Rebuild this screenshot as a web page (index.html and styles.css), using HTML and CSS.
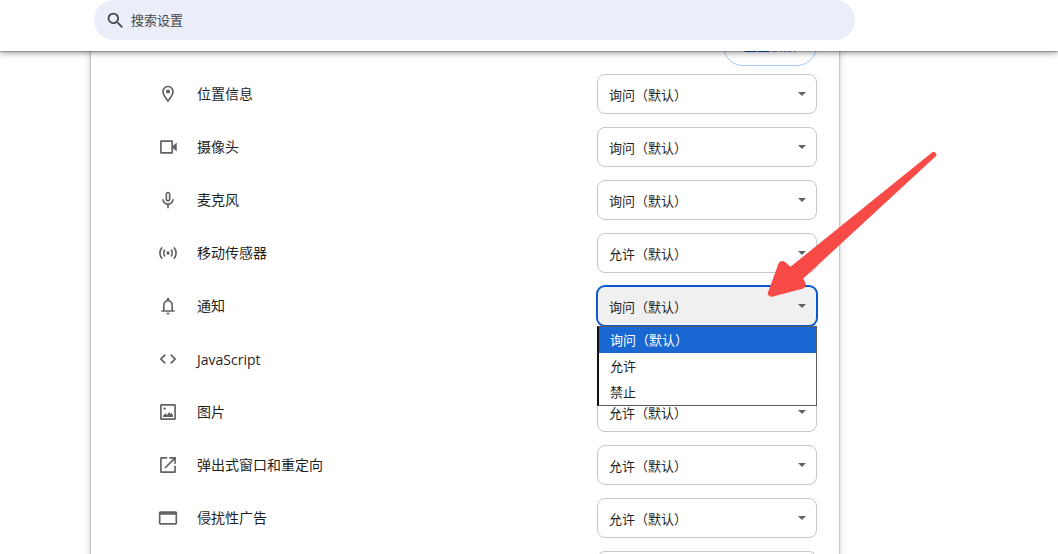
FILE: index.html
```html
<!DOCTYPE html>
<html lang="zh-CN">
<head>
<meta charset="utf-8">
<title>设置</title>
<link rel="stylesheet" href="styles.css">
</head>
<body>
<div class="app">
  <header class="toolbar">
    <label class="search">
      <svg class="search-icon" viewBox="0 0 24 24" aria-hidden="true"><path d="M15.5 14h-.79l-.28-.27A6.47 6.47 0 0 0 16 9.5 6.5 6.5 0 1 0 9.5 16c1.61 0 3.09-.59 4.23-1.57l.27.28v.79l5 4.99L20.49 19l-4.99-5zm-6 0C7.01 14 5 11.99 5 9.5S7.01 5 9.5 5 14 7.01 14 9.5 11.99 14 9.5 14z"/></svg>
      <input class="search-input" type="text" placeholder="搜索设置" aria-label="搜索设置">
    </label>
  </header>

  <main class="content">
    <section class="card">
      <div class="card-actions"><button class="reset" type="button">重置权限</button></div>

      <div class="row">
        <svg class="icon" viewBox="0 0 24 24" aria-hidden="true"><path d="M12 2C8.13 2 5 5.13 5 9c0 5.25 7 13 7 13s7-7.75 7-13c0-3.87-3.13-7-7-7zM7 9c0-2.76 2.24-5 5-5s5 2.24 5 5c0 2.88-2.88 7.19-5 9.88C9.92 16.21 7 11.85 7 9z"/><circle cx="12" cy="9" r="2.5"/></svg>
        <label class="label" for="location">位置信息</label>
        <div class="picker"><select class="select" id="location"><option>询问（默认）</option><option>允许</option><option>禁止</option></select></div>
      </div>

      <div class="row">
        <svg class="icon" viewBox="0 0 24 24" aria-hidden="true"><path d="M18 10.500V5a1 1 0 0 0-1-1H3.500a1 1 0 0 0-1 1v14a1 1 0 0 0 1 1H17a1 1 0 0 0 1-1v-5.500l4.500 4v-11zM16 18H4.500V6H16z"/></svg>
        <label class="label" for="camera">摄像头</label>
        <div class="picker"><select class="select" id="camera"><option>询问（默认）</option><option>允许</option><option>禁止</option></select></div>
      </div>

      <div class="row">
        <svg class="icon" viewBox="0 0 24 24" aria-hidden="true"><path d="M12 14c1.660 0 3-1.340 3-3V5c0-1.660-1.340-3-3-3S9 3.340 9 5v6c0 1.660 1.340 3 3 3zm-1-9c0-.55.45-1 1-1s1 .45 1 1v6c0 .55-.45 1-1 1s-1-.45-1-1V5zm6 6c0 2.760-2.240 5-5 5s-5-2.240-5-5H5c0 3.530 2.610 6.430 6 6.920V22h2v-4.080c3.390-.49 6-3.390 6-6.920h-2z"/></svg>
        <label class="label" for="microphone">麦克风</label>
        <div class="picker"><select class="select" id="microphone"><option>询问（默认）</option><option>允许</option><option>禁止</option></select></div>
      </div>

      <div class="row">
        <svg class="icon line" viewBox="0 0 24 24" aria-hidden="true"><circle class="dot" cx="12" cy="12" r="2"/><path d="M8.500 8a5.800 5.800 0 0 0 0 8M15.500 8a5.800 5.800 0 0 1 0 8M5 5.200a10 10 0 0 0 0 13.600M19 5.200a10 10 0 0 1 0 13.600"/></svg>
        <label class="label" for="sensors">移动传感器</label>
        <div class="picker"><select class="select" id="sensors"><option>允许（默认）</option><option>禁止</option></select></div>
      </div>

      <div class="row">
        <svg class="icon" viewBox="0 0 24 24" aria-hidden="true"><path d="M12 22c1.100 0 2-.9 2-2h-4c0 1.100.9 2 2 2zm6-5v-6c0-3.070-1.630-5.640-4.500-6.320V3.500c0-.83-.67-1.500-1.500-1.500s-1.500.67-1.500 1.500v1.180C7.640 5.360 6 7.920 6 11v6H4v2h16v-2h-2zm-2 0H8v-6c0-2.480 1.510-4.500 4-4.500s4 2.020 4 4.500v6z"/></svg>
        <label class="label" for="notifications">通知</label>
        <div class="picker open">
          <select class="select" id="notifications"><option>询问（默认）</option><option>允许</option><option>禁止</option></select>
          <ul class="menu" role="listbox" aria-label="通知">
            <li class="option selected" role="option" aria-selected="true">询问（默认）</li>
            <li class="option" role="option" aria-selected="false">允许</li>
            <li class="option" role="option" aria-selected="false">禁止</li>
          </ul>
        </div>
      </div>

      <div class="row">
        <svg class="icon" viewBox="0 0 24 24" aria-hidden="true"><path d="M9.400 16.600 4.800 12l4.600-4.600L8 6l-6 6 6 6 1.400-1.400zm5.200 0 4.600-4.600-4.600-4.600L16 6l6 6-6 6-1.400-1.400z"/></svg>
        <label class="label latin" for="javascript">JavaScript</label>
        <div class="picker"><select class="select" id="javascript"><option>允许（默认）</option><option>禁止</option></select></div>
      </div>

      <div class="row">
        <svg class="icon" viewBox="0 0 24 24" aria-hidden="true"><path d="M20 2.500H4A1.500 1.500 0 0 0 2.500 4v16A1.500 1.500 0 0 0 4 21.500h16a1.500 1.500 0 0 0 1.500-1.500V4A1.500 1.500 0 0 0 20 2.500zm-.5 17h-15v-15h15v15z"/><path d="M6 18v-1.500l3-3 2 2 2.200-3.500 1.800 2.500 1-1.500 2 3V18zM8 6l.7 1.300L10 8l-1.300.7L8 10l-.7-1.300L6 8l1.300-.7z"/></svg>
        <label class="label" for="images">图片</label>
        <div class="picker"><select class="select" id="images"><option>允许（默认）</option><option>禁止</option></select></div>
      </div>

      <div class="row">
        <svg class="icon" viewBox="0 0 24 24" aria-hidden="true"><path d="M19.500 19.500h-15v-15H11v-2H4A1.500 1.500 0 0 0 2.500 4v16A1.500 1.500 0 0 0 4 21.500h16a1.500 1.500 0 0 0 1.500-1.500v-7h-2v6.500zM13.500 2.500v2h4.600L7.700 14.900l1.400 1.400L19.500 5.900v4.600h2v-8h-8z"/></svg>
        <label class="label" for="popups">弹出式窗口和重定向</label>
        <div class="picker"><select class="select" id="popups"><option>允许（默认）</option><option>禁止</option></select></div>
      </div>

      <div class="row">
        <svg class="icon" viewBox="0 0 24 24" aria-hidden="true"><path d="M21 4H3a2 2 0 0 0-2 2v12a2 2 0 0 0 2 2h18a2 2 0 0 0 2-2V6a2 2 0 0 0-2-2zm0 14H3V8h18v10z"/></svg>
        <label class="label" for="ads">侵扰性广告</label>
        <div class="picker"><select class="select" id="ads"><option>允许（默认）</option><option>禁止</option></select></div>
      </div>

      <div class="row last">
        <div class="picker"><select class="select" aria-label="权限"><option>允许（默认）</option><option>禁止</option></select></div>
      </div>
    </section>
  </main>

  <svg class="pointer" viewBox="0 0 170 150" aria-hidden="true"><path d="M165 2.500Q166.500 1 168 2.500L169 3.500Q170 5 168.500 6.500L36.300 128.500L38.500 133Q40 137 35.500 138.800L6 146.600Q2 147.500 1 144.500Q.5 143 1.500 141L11.500 113.500Q14 109.500 18 112L23.500 116.800Z"/></svg>
</div>
</body>
</html>
```

FILE: styles.css
```css
* {
  box-sizing: border-box;
}

body {
  margin: 0;
  background: #fff;
  color: #1f1f1f;
  font-family: "Noto Sans CJK SC", "Open Sans", sans-serif;
  font-size: 14px;
}

.app {
  position: relative;
  height: 100vh;
  overflow: hidden;
}

.toolbar {
  position: fixed;
  inset: 0 0 auto;
  z-index: 3;
  padding: 0 203px 11px 94px;
  background: #fff;
  box-shadow: 0 1px 1px rgba(0, 0, 0, .2), 0 2px 6px rgba(0, 0, 0, .4);
}

.search {
  display: flex;
  align-items: center;
  gap: 5px;
  height: 40px;
  padding: 0 11px;
  border-radius: 20px;
  background: #ebeef8;
}

.search-icon {
  flex: none;
  width: 21px;
  height: 21px;
  fill: #474747;
}

.search-input {
  flex: 1;
  min-width: 0;
  padding: 0 0 2px;
  border: 0;
  outline: 0;
  background: none;
  font: inherit;
  font-size: 13px;
}

.search-input::placeholder {
  color: #474747;
  opacity: 1;
}

.content {
  padding: 0 219px 0 91px;
}

.card {
  padding: 26px 22px 20px 67px;
  background: #fff;
  box-shadow: 0 0 2px rgba(60, 64, 67, .6), 0 0 7px 1px rgba(60, 64, 67, .2);
}

.card-actions {
  display: flex;
  justify-content: flex-end;
  padding-bottom: 1px;
}

.reset {
  height: 40px;
  padding: 0 20px 3px;
  border: 1px solid #a8c7fa;
  border-radius: 20px;
  background: #fff;
  color: #0b57d0;
  font: inherit;
  font-size: 13px;
  font-weight: 500;
}

.row {
  display: flex;
  align-items: center;
  padding: 7px 0 6px;
}

.last {
  justify-content: flex-end;
}

.icon {
  flex: none;
  width: 20px;
  height: 20px;
  fill: #5f6368;
}

.icon.line {
  fill: none;
  stroke: #5f6368;
  stroke-width: 2;
}

.icon .dot {
  fill: #5f6368;
  stroke: none;
}

.label {
  flex: 1;
  padding: 0 0 2px 19px;
}

.latin {
  padding-bottom: 0;
  font-family: "Open Sans", sans-serif;
}

.picker {
  position: relative;
  width: 220px;
}

.picker::after {
  content: "";
  position: absolute;
  top: 18px;
  right: 11px;
  border: 4px solid transparent;
  border-top-color: #5f6368;
  border-bottom: 0;
  pointer-events: none;
}

.select {
  display: block;
  width: 100%;
  height: 40px;
  padding: 0 24px 0 11px;
  border: 1px solid #c7c7c7;
  border-radius: 8px;
  outline: 0;
  appearance: none;
  background: #fff;
  color: #1f1f1f;
  font: inherit;
  font-size: 13px;
}

.open .select {
  border-color: #0b57d0;
  background: #f0f0f1;
  box-shadow: 0 0 0 1px #0b57d0;
}

.menu {
  position: absolute;
  top: 100%;
  left: 0;
  z-index: 2;
  width: 100%;
  margin: 0;
  padding: 0;
  border: 1px solid #5c5c5c;
  border-left: 2px solid #101010;
  background: #fff;
  list-style: none;
}

.option {
  padding-left: 11px;
  font-size: 13px;
  line-height: 26px;
}

.selected {
  background: #1967d2;
  color: #fff;
}

.pointer {
  position: absolute;
  top: 150px;
  left: 767px;
  z-index: 4;
  width: 170px;
  height: 150px;
  fill: #f84a46;
}
```
